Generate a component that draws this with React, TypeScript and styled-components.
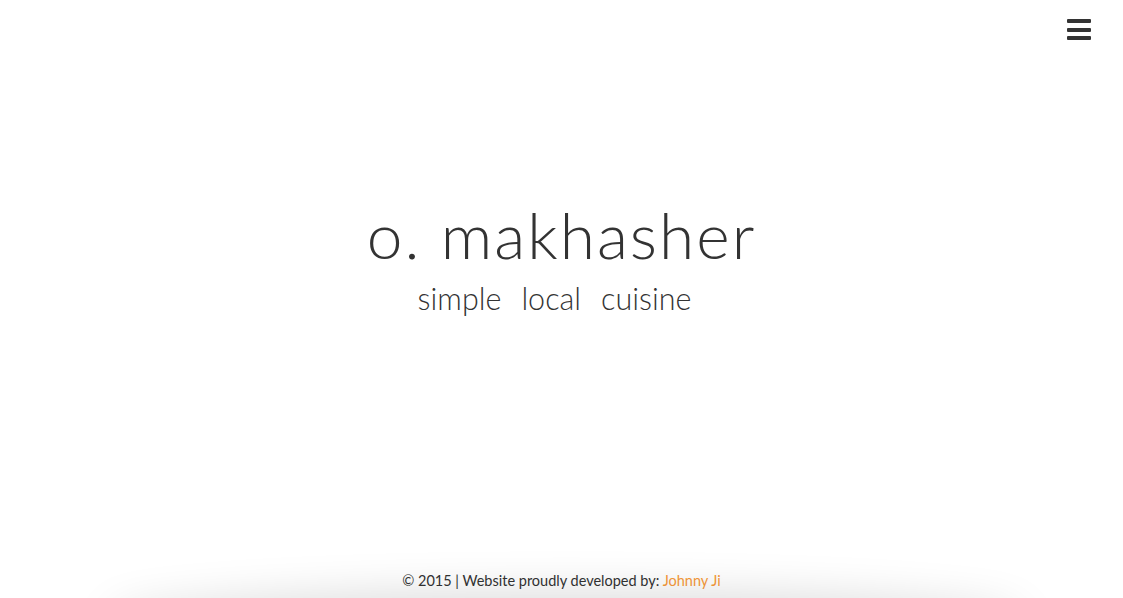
import React from "react";
import styled, { createGlobalStyle } from "styled-components";

const Global = createGlobalStyle`
  html, body { margin: 0; padding: 0; background: #fff; overflow: hidden; }
  body { font-family: "Lato", "Open Sans", sans-serif; color: #333; }
`;

const Page = styled.div`
  height: 598px;
  display: flex;
  flex-direction: column;
  overflow: hidden;
`;

const TopBar = styled.header`
  display: flex;
  justify-content: flex-end;
  padding: 19px 32px 0 0;
`;

const MenuButton = styled.button`
  border: 0;
  background: transparent;
  padding: 0;
  width: 24px;
  height: 21px;
  display: flex;
  flex-direction: column;
  justify-content: space-between;
  cursor: pointer;
`;

const Bar = styled.span`
  display: block;
  height: 4px;
  border-radius: 1px;
  background: #333;
`;

const Hero = styled.main`
  flex: 1;
  display: flex;
  flex-direction: column;
  align-items: center;
  padding-top: 157px;
`;

const Title = styled.h1`
  margin: 0;
  font-family: "Lato", sans-serif;
  font-weight: 300;
  font-size: 64px;
  line-height: 76px;
  color: #333;
  letter-spacing: 2px;
`;

const Tagline = styled.div`
  display: flex;
  gap: 20px;
  margin-top: 7px;
  padding-right: 14px;
  font-family: "Lato", sans-serif;
  font-weight: 300;
  font-size: 30.5px;
  line-height: 36px;
  color: #333;
`;

const Footer = styled.footer`
  position: relative;
  text-align: center;
  font-family: "Lato", sans-serif;
  font-size: 14.5px;
  line-height: 20px;
  color: #333;
  padding-bottom: 7px;

  &::after {
    content: "";
    position: absolute;
    left: 105px;
    right: 95px;
    top: 100%;
    height: 60px;
    border-radius: 50%;
    box-shadow: 0 -6px 45px rgba(0, 0, 0, 0.14);
  }
`;

const Author = styled.a`
  color: #f89a3a;
  text-decoration: none;
`;

export default function App() {
  return (
    <Page>
      <Global />
      <TopBar>
        <MenuButton aria-label="menu">
          <Bar />
          <Bar />
          <Bar />
        </MenuButton>
      </TopBar>
      <Hero>
        <Title>o. makhasher</Title>
        <Tagline>
          <span>simple</span>
          <span>local</span>
          <span>cuisine</span>
        </Tagline>
      </Hero>
      <Footer>
        © 2015 | Website proudly developed by: <Author href="#">Johnny Ji</Author>
      </Footer>
    </Page>
  );
}
